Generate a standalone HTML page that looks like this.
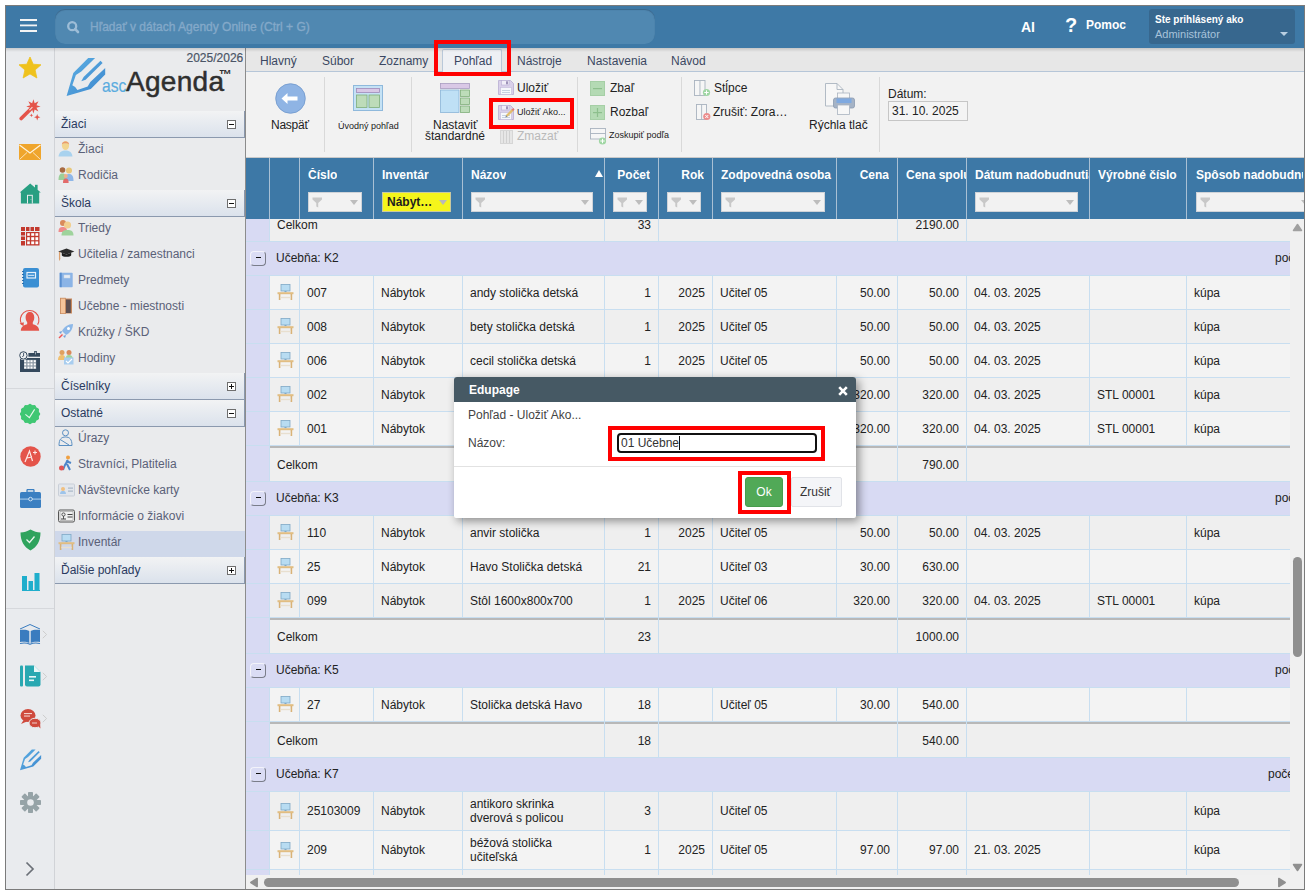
<!DOCTYPE html>
<html><head><meta charset="utf-8"><style>
*{box-sizing:border-box;margin:0;padding:0}
html,body{width:1310px;height:895px;overflow:hidden;background:#fff;font-family:"Liberation Sans",sans-serif;font-size:12px;color:#222}
.a{position:absolute;white-space:nowrap}
.t{position:absolute;white-space:nowrap;line-height:14px}
#frame{position:absolute;left:5px;top:5px;width:1300px;height:885px;border:1px solid #7b7b7b}
#top{position:absolute;left:6px;top:6px;width:1298px;height:42px;background:#3e79a6}
#icons{position:absolute;left:6px;top:48px;width:49px;height:841px;background:#e9ebee;border-right:1px solid #d1d3d7}
#side{position:absolute;left:55px;top:48px;width:190px;height:841px;background:#eaebed}
#main{position:absolute;left:245px;top:48px;width:1059px;height:841px;border-left:1px solid #8c8c8c;background:#f2f2f2}
.sh{position:absolute;left:55px;width:190px;height:27px;border-bottom:1px solid #8b99ae;background:linear-gradient(#f2f3f4,#dbe2ec);border-right:1px solid #8a98ad}
.sh span{position:absolute;left:6px;top:6px;color:#2a3a60;line-height:14px}
.sh i{position:absolute;left:172px;top:9px;width:9px;height:9px;border:1px solid #6e6e6e;background:#fff}
.sh i:before{content:"";position:absolute;left:1px;top:3px;width:5px;height:1.4px;background:#111}
.sh i.p:after{content:"";position:absolute;left:2.8px;top:1px;width:1.4px;height:5px;background:#111}
.si{position:absolute;left:55px;width:190px;height:26px}
.si span{position:absolute;left:23px;top:4px;color:#5a6178;line-height:14px}
.si svg{position:absolute;left:3px;top:2px}
.tab{position:absolute;top:54px;line-height:14px;color:#3b4762}
.sep{position:absolute;top:77px;width:1px;height:75px;background:#d9d9d9}
.rib{position:absolute;line-height:14px;color:#222;white-space:nowrap}
.hd{position:absolute;top:168px;color:#fff;font-weight:bold;line-height:14px;white-space:nowrap;overflow:hidden}
.hs{position:absolute;top:158px;width:1px;height:61px;background:#a9c0d4}
.flt{position:absolute;top:192px;height:20px;background:#f2f2f2;border:1px solid #d8d8d8}
.flt:before{content:"";position:absolute;left:6px;top:5px;border-left:6px solid transparent;border-right:6px solid transparent;border-top:6px solid #c6c6c6}
.flt:after{content:"";position:absolute;right:8px;top:8px;border-left:5px solid transparent;border-right:5px solid transparent;border-top:5px solid #c0c0c0}
.fstem{position:absolute;top:9px;left:11px;width:2px;height:6px;background:#c6c6c6}
.row{position:absolute;left:246px;width:1044px;overflow:hidden}
.c{position:absolute;top:0;height:100%;border-right:1px solid #c8def0;line-height:14px;white-space:nowrap;overflow:hidden}
.c span{position:absolute;left:7px}
.c span.r{left:auto;right:7px}
.grp{position:absolute;left:0;top:0;width:23px;height:100%;background:#d8daf3}
.btn{position:absolute;left:4px;top:9px;width:16px;height:15px;border:1px solid;border-color:#f3f3fa #7a7d89 #7a7d89 #f3f3fa;border-radius:4px;background:#dadcf4}
.btn:before{content:"";position:absolute;left:5px;top:5px;width:5px;height:1px;background:#111}
.red{position:absolute;border:4px solid #f00}
</style></head><body>
<div id="frame"></div>
<div id="top"></div>
<svg class="a" style="left:20px;top:19px" width="17" height="13"><rect x="0" y="0" width="17" height="2" fill="#f4f4f4"/><rect x="0" y="5.5" width="17" height="1.8" fill="#f4f4f4"/><rect x="0" y="11" width="17" height="2" fill="#f4f4f4"/></svg>
<div class="a" style="left:55px;top:9px;width:600px;height:35px;border-radius:10px;background:#5088b1;box-shadow:inset 0 1px 1px rgba(30,60,90,.45)"></div>
<svg class="a" style="left:65px;top:19px" width="16" height="16"><circle cx="7.2" cy="7.2" r="4.0" stroke="#9dbdd7" stroke-width="2.3" fill="none"/><line x1="10.2" y1="10.2" x2="13" y2="13" stroke="#9dbdd7" stroke-width="2.6" stroke-linecap="round"/></svg>
<div class="t" style="left:90px;top:20px;color:#84a9c9;-webkit-text-stroke:0.35px #84a9c9">Hľadať v dátach Agendy Online (Ctrl + G)</div>
<div class="t" style="left:1021px;top:18.5px;color:#fff;font-weight:bold;font-size:14px;line-height:16px">AI</div>
<div class="t" style="left:1065px;top:14px;color:#fff;font-weight:bold;font-size:20px;line-height:22px">?</div>
<div class="t" style="left:1086px;top:18px;color:#fff;font-weight:bold">Pomoc</div>
<div class="a" style="left:1149px;top:9px;width:146px;height:35px;border-radius:3px;background:#37678e"></div>
<div class="t" style="left:1155px;top:14px;color:#fff;font-weight:bold;font-size:10px;line-height:11px">Ste prihlásený ako</div>
<div class="t" style="left:1155px;top:28px;color:#a8c3db;font-size:11px;line-height:12px">Administrátor</div>
<div class="a" style="left:1280px;top:32px;border-left:4px solid transparent;border-right:4px solid transparent;border-top:4px solid #b9cfe1"></div>
<div id="icons"></div>
<div class="a" style="left:6px;top:388px;width:48px;height:1px;background:#d6d8dc"></div>
<div class="a" style="left:6px;top:608px;width:48px;height:1px;background:#d6d8dc"></div>

<svg class="a" style="left:19px;top:57px" width="22" height="22" viewBox="0 0 22 22"><polygon points="11,0 14.2,7.2 22,7.8 16.1,12.9 17.9,21 11,16.9 4.1,21 5.9,12.9 0,7.8 7.8,7.2" fill="#efc21d" stroke="#efc21d" stroke-width="0.8" stroke-linejoin="round"/></svg>
<svg class="a" style="left:19px;top:99px" width="23" height="23" viewBox="0 0 23 23"><polygon points="14.40,0.20 15.66,4.35 19.49,2.31 17.45,6.14 21.60,7.40 17.45,8.66 19.49,12.49 15.66,10.45 14.40,14.60 13.14,10.45 9.31,12.49 11.35,8.66 7.20,7.40 11.35,6.14 9.31,2.31 13.14,4.35" fill="#e4544a"/><line x1="2.2" y1="19.6" x2="13.6" y2="8.2" stroke="#e4544a" stroke-width="3.6" stroke-linecap="round"/><line x1="10.4" y1="11.2" x2="13.4" y2="8.2" stroke="#f6d6d3" stroke-width="1.1"/><polygon points="12.40,14.40 12.89,15.81 14.30,16.30 12.89,16.79 12.40,18.20 11.91,16.79 10.50,16.30 11.91,15.81" fill="#e4544a"/><polygon points="18.20,15.00 19.05,17.35 21.40,18.20 19.05,19.05 18.20,21.40 17.35,19.05 15.00,18.20 17.35,17.35" fill="#e4544a"/></svg>
<svg class="a" style="left:19px;top:144px" width="22" height="17" viewBox="0 0 22 17"><rect x="0" y="0" width="22" height="16" fill="#efa52c"/><polyline points="0.5,1 11,9 21.5,1" stroke="#fff3dc" stroke-width="1.2" fill="none"/><polyline points="0.5,15.5 8,8.5" stroke="#fff3dc" stroke-width="0.8" fill="none"/><polyline points="21.5,15.5 14,8.5" stroke="#fff3dc" stroke-width="0.8" fill="none"/></svg>
<svg class="a" style="left:20px;top:183px" width="21" height="21" viewBox="0 0 21 21"><polygon points="10.2,0.5 20.8,9.6 19.2,9.6 19.2,20.5 0.9,20.5 0.9,9.6 -0.4,9.6" fill="#289f82"/><rect x="15" y="1.8" width="2.6" height="5" fill="#289f82"/><rect x="7" y="11.8" width="5.8" height="8.7" fill="#e9ebee"/><rect x="8" y="12.8" width="3.8" height="7.7" fill="#289f82"/><rect x="10.6" y="16" width="0.7" height="0.7" fill="#cfe9e1"/></svg>
<svg class="a" style="left:21px;top:227px" width="19" height="19" viewBox="0 0 19 19"><g fill="#c2392e"><rect x="0" y="0" width="4" height="4"/><rect x="5" y="0" width="3.5" height="4"/><rect x="9.5" y="0" width="3.5" height="4"/><rect x="14" y="0" width="4.5" height="4"/><rect x="0" y="5" width="4" height="3.5"/><rect x="0" y="9.5" width="4" height="3.5"/><rect x="0" y="14" width="4" height="4.5"/><rect x="5" y="5" width="13.5" height="13.5"/></g><g fill="#fff"><rect x="6.2" y="6.2" width="2.6" height="2.6"/><rect x="10.2" y="6.2" width="3" height="2.6"/><rect x="14.4" y="6.2" width="2.8" height="2.6"/><rect x="6.2" y="10.2" width="2.6" height="3"/><rect x="10.2" y="10.2" width="3" height="3"/><rect x="14.4" y="10.2" width="2.8" height="3"/><rect x="6.2" y="14.4" width="2.6" height="2.8"/><rect x="10.2" y="14.4" width="3" height="2.8"/><rect x="14.4" y="14.4" width="2.8" height="2.8"/></g></svg>
<svg class="a" style="left:22px;top:268px" width="17" height="20" viewBox="0 0 17 20"><rect x="1" y="0" width="16" height="19.5" rx="2" fill="#3a8fd3"/><g fill="#2a6fae"><rect x="0" y="3" width="2" height="1"/><rect x="0" y="6" width="2" height="1"/><rect x="0" y="9" width="2" height="1"/><rect x="0" y="12" width="2" height="1"/><rect x="0" y="15" width="2" height="1"/></g><rect x="5" y="4.5" width="8.5" height="5.5" fill="none" stroke="#e6f1fb" stroke-width="1.2"/><rect x="6.2" y="6.8" width="6" height="1" fill="#e6f1fb"/></svg>
<svg class="a" style="left:19px;top:309px" width="23" height="23" viewBox="0 0 23 23"><path d="M6.6 8.5 C6.6 5 8.5 3 11 3 C13.5 3 15.3 5 15.3 8.5 C15.3 11 14.2 12.6 13.8 13.2 L13.8 15.2 C17 16 20 17.5 20.2 21.8 L1.8 21.8 C2 17.5 5 16 8.2 15.2 L8.2 13.2 C7.7 12.6 6.6 11 6.6 8.5z" fill="#e4544a"/><path d="M2.6 15.5 A9.3 9.3 0 1 1 18.6 15.6" stroke="#e4544a" stroke-width="1.1" fill="none"/><polygon points="0.6,14.6 4.8,13.2 4.6,17.2" fill="#e4544a"/></svg>
<svg class="a" style="left:19px;top:351px" width="22" height="22" viewBox="0 0 22 22"><rect x="9.4" y="2" width="11.6" height="3.7" fill="#35495d"/><rect x="15.2" y="0" width="2.6" height="3.8" fill="#35495d"/><rect x="16.2" y="0.8" width="0.7" height="2.6" fill="#cfd6dd"/><rect x="1" y="7" width="20" height="14" fill="#35495d"/><rect x="5" y="8.8" width="12.2" height="9.2" fill="#8d99a5"/><g fill="#fff"><rect x="5.2" y="9.2" width="2" height="2"/><rect x="8.5" y="9.2" width="2" height="2"/><rect x="11.5" y="9.2" width="2" height="2"/><rect x="14.8" y="9.2" width="2" height="2"/><rect x="5.2" y="12.4" width="2" height="2"/><rect x="8.5" y="12.4" width="2" height="2"/><rect x="11.5" y="12.4" width="2" height="2"/><rect x="14.8" y="12.4" width="2" height="2"/><rect x="5.2" y="15.6" width="2" height="2"/><rect x="8.5" y="15.6" width="2" height="2"/><rect x="11.5" y="15.6" width="2" height="2"/><rect x="14.8" y="15.6" width="2" height="2"/></g><circle cx="4.4" cy="4.4" r="4.6" fill="#e9ebee"/><circle cx="4.4" cy="4.4" r="3.7" fill="#eef0f2" stroke="#35495d" stroke-width="1"/><path d="M4.6 1.8 V5 L3.2 5.6" stroke="#35495d" stroke-width="0.9" fill="none"/></svg>
<svg class="a" style="left:20px;top:403px" width="21" height="22" viewBox="0 0 21 22"><polygon points="20.20,11.00 20.03,11.66 19.62,12.27 19.17,12.82 18.89,13.38 18.85,14.00 18.96,14.71 19.02,15.45 18.83,16.10 18.36,16.59 17.70,16.90 17.03,17.16 16.51,17.51 16.16,18.03 15.90,18.70 15.59,19.36 15.10,19.83 14.45,20.02 13.71,19.96 13.00,19.85 12.38,19.89 11.82,20.17 11.27,20.62 10.66,21.03 10.00,21.20 9.34,21.03 8.73,20.62 8.18,20.17 7.62,19.89 7.00,19.85 6.29,19.96 5.55,20.02 4.90,19.83 4.41,19.36 4.10,18.70 3.84,18.03 3.49,17.51 2.97,17.16 2.30,16.90 1.64,16.59 1.17,16.10 0.98,15.45 1.04,14.71 1.15,14.00 1.11,13.38 0.83,12.82 0.38,12.27 -0.03,11.66 -0.20,11.00 -0.03,10.34 0.38,9.73 0.83,9.18 1.11,8.62 1.15,8.00 1.04,7.29 0.98,6.55 1.17,5.90 1.64,5.41 2.30,5.10 2.97,4.84 3.49,4.49 3.84,3.97 4.10,3.30 4.41,2.64 4.90,2.17 5.55,1.98 6.29,2.04 7.00,2.15 7.62,2.11 8.18,1.83 8.73,1.38 9.34,0.97 10.00,0.80 10.66,0.97 11.27,1.38 11.82,1.83 12.38,2.11 13.00,2.15 13.71,2.04 14.45,1.98 15.10,2.17 15.59,2.64 15.90,3.30 16.16,3.97 16.51,4.49 17.03,4.84 17.70,5.10 18.36,5.41 18.83,5.90 19.02,6.55 18.96,7.29 18.85,8.00 18.89,8.62 19.17,9.18 19.62,9.73 20.03,10.34" fill="#3fc773"/><polyline points="5.4,11.3 9.4,14.6 14.6,6.4" stroke="#e6f8ec" stroke-width="1.1" fill="none"/></svg>
<svg class="a" style="left:20px;top:446px" width="21" height="21" viewBox="0 0 21 21"><circle cx="10.5" cy="10.5" r="10.2" fill="#e4544a"/><path d="M5 16 L9.5 5 L12.5 15 M7 12 L12 11" stroke="#fde8e6" stroke-width="1.2" fill="none"/><path d="M13 6.5 h4 M15 4.5 v4" stroke="#fde8e6" stroke-width="1.1"/></svg>
<svg class="a" style="left:20px;top:489px" width="21" height="19" viewBox="0 0 21 19"><rect x="7" y="0.5" width="7" height="3" rx="1" fill="none" stroke="#3b7fc1" stroke-width="1.3"/><rect x="0" y="3" width="21" height="16" rx="1.5" fill="#3b7fc1"/><rect x="0" y="9.5" width="21" height="1.2" fill="#9ec3e6"/><circle cx="10.5" cy="10.1" r="1.8" fill="#3b7fc1" stroke="#cfe3f5" stroke-width="1"/></svg>
<svg class="a" style="left:20px;top:529px" width="21" height="22" viewBox="0 0 21 22"><path d="M10.5 0.5 C14 2.5 17 3.5 20.5 3.5 C20.5 12 17 18 10.5 21.5 C4 18 0.5 12 0.5 3.5 C4 3.5 7 2.5 10.5 0.5z" fill="#2fa35d"/><polyline points="6.5,10.5 9.5,13.5 14.5,7.5" stroke="#e8f6ed" stroke-width="1.3" fill="none"/></svg>
<svg class="a" style="left:22px;top:573px" width="18" height="18" viewBox="0 0 18 18"><rect x="0" y="3" width="5" height="14" fill="#1faecc"/><rect x="6.5" y="8" width="4.5" height="9" fill="#1faecc"/><rect x="12.5" y="0" width="5" height="17" fill="#1faecc"/><rect x="0" y="17" width="18" height="1" fill="#1faecc"/></svg>
<svg class="a" style="left:19px;top:624px" width="22" height="21" viewBox="0 0 22 21"><path d="M1 5 L11 0.5 L21 5" stroke="#3a7cbf" stroke-width="1" fill="none"/><path d="M1 6 C4 5.5 8 5.5 10.3 7 V19 C8 17.5 4 17.5 1 18z" fill="#3a7cbf"/><path d="M21 6 C18 5.5 14 5.5 11.7 7 V19 C14 17.5 18 17.5 21 18z" fill="#3a7cbf"/><path d="M1 19.5 C4 18.8 8 18.8 11 20.3 C14 18.8 18 18.8 21 19.5" stroke="#3a7cbf" stroke-width="1.2" fill="none"/></svg>
<svg class="a" style="left:42px;top:630px" width="6" height="10"><polyline points="0.8,0.8 4.6,4.5 0.8,8.2" stroke="#cdcdcd" stroke-width="1" fill="none"/></svg>
<svg class="a" style="left:20px;top:665px" width="21" height="22" viewBox="0 0 21 22"><rect x="0" y="0.5" width="3" height="21" rx="1" fill="#29a8b1"/><path d="M5 0.5 H14 L20.5 7 V19.5 a2 2 0 0 1 -2 2 H7 a2 2 0 0 1 -2 -2z" fill="#29a8b1"/><path d="M14 0.5 V7 H20.5z" fill="#e9f7f8"/><rect x="9" y="11" width="7" height="1.6" fill="#e9f7f8"/><rect x="9" y="14.5" width="5" height="1.6" fill="#e9f7f8"/></svg>
<svg class="a" style="left:42px;top:672px" width="6" height="10"><polyline points="0.8,0.8 4.6,4.5 0.8,8.2" stroke="#cdcdcd" stroke-width="1" fill="none"/></svg>
<svg class="a" style="left:20px;top:708px" width="21" height="21" viewBox="0 0 21 21"><ellipse cx="8" cy="7.5" rx="7.5" ry="6.5" fill="#cf4a3d"/><polygon points="1,16 4,11.5 8,13" fill="#cf4a3d"/><ellipse cx="15" cy="15" rx="6" ry="4.8" fill="#cf4a3d" stroke="#e9ebee" stroke-width="1"/><polygon points="20.5,20.5 17,17 20,16" fill="#cf4a3d"/><g fill="#f4d0cc"><rect x="4" y="5" width="8" height="1.1"/><rect x="4" y="7.5" width="6" height="1.1"/><rect x="12" y="14.5" width="5" height="1"/></g></svg>
<svg class="a" style="left:42px;top:714px" width="6" height="10"><polyline points="0.8,0.8 4.6,4.5 0.8,8.2" stroke="#cdcdcd" stroke-width="1" fill="none"/></svg>
<svg class="a" style="left:16px;top:746px" width="28" height="27" viewBox="0 0 48 46"><g transform="translate(2.5,2.2) scale(0.94)"><defs><linearGradient id="pg1" x1="0" y1="0" x2="1" y2="1"><stop offset="0" stop-color="#5db0e4"/><stop offset="1" stop-color="#3c86cd"/></linearGradient></defs><path d="M4.6 41.9 L11.3 19 L26.2 4 L33.1 4 L19.3 17.5 L13.9 21.1 L10.3 31.3 Q13.5 32.5 15.4 36 L25.7 32.6 L28.3 28 L43.2 14.1 L43.2 20.6 L28.8 35 Z" fill="url(#pg1)"/><path d="M38.5 6.7 L40.6 9 L23.6 25.7 L19.3 27.2 L21.6 23.1 Z" fill="url(#pg1)"/></g></svg>
<svg class="a" style="left:20px;top:792px" width="21" height="21" viewBox="0 0 21 21"><g fill="#96a3a7"><circle cx="10.5" cy="10.5" r="7"/><rect x="8" y="0" width="5" height="4.5" rx="0.8"/><rect x="8" y="16.5" width="5" height="4.5" rx="0.8"/><rect x="0" y="8" width="4.5" height="5" rx="0.8"/><rect x="16.5" y="8" width="4.5" height="5" rx="0.8"/><rect x="8" y="0" width="5" height="4.5" rx="0.8" transform="rotate(45 10.5 10.5)"/><rect x="8" y="16.5" width="5" height="4.5" rx="0.8" transform="rotate(45 10.5 10.5)"/><rect x="0" y="8" width="4.5" height="5" rx="0.8" transform="rotate(45 10.5 10.5)"/><rect x="16.5" y="8" width="4.5" height="5" rx="0.8" transform="rotate(45 10.5 10.5)"/></g><circle cx="10.5" cy="10.5" r="3.3" fill="#e9ebee"/></svg>
<svg class="a" style="left:25px;top:861px" width="10" height="16" viewBox="0 0 10 16"><polyline points="1.5,1.5 8,8 1.5,14.5" stroke="#6b7077" stroke-width="1.7" fill="none"/></svg>

<div id="side"></div>
<div class="t" style="left:186.5px;top:51px;color:#4b5566;-webkit-text-stroke:0.2px #4b5566">2025/2026</div>
<svg class="a" style="left:62px;top:54px" width="48" height="46" viewBox="0 0 48 46"><defs><linearGradient id="lg" x1="0" y1="0" x2="1" y2="1"><stop offset="0" stop-color="#5db0e4"/><stop offset="1" stop-color="#3c86cd"/></linearGradient></defs><path d="M4.6 41.9 L11.3 19 L26.2 4 L33.1 4 L19.3 17.5 L13.9 21.1 L10.3 31.3 Q13.5 32.5 15.4 36 L25.7 32.6 L28.3 28 L43.2 14.1 L43.2 20.6 L28.8 35 Z" fill="url(#lg)"/><path d="M38.5 6.7 L40.6 9 L23.6 25.7 L19.3 27.2 L21.6 23.1 Z" fill="url(#lg)"/></svg>
<div class="t" style="left:102px;top:76px;color:#5aabdf;font-size:19px;line-height:20px;-webkit-text-stroke:0.2px #5aabdf;transform:scaleX(0.82);transform-origin:0 0">asc</div>
<div class="t" style="left:126px;top:67px;color:#2f2f2f;font-size:28px;line-height:30px;letter-spacing:0.3px;-webkit-text-stroke:0.5px #2f2f2f">Agenda</div>
<div class="t" style="left:219px;top:68px;color:#2f2f2f;font-size:13px;line-height:14px;font-weight:bold">™</div>
<div class="sh" style="top:111px"><span>Žiaci</span><i></i></div>
<div class="si" style="top:138px;"><svg width="15" height="17" viewBox="0 0 15 17"><ellipse cx="7.5" cy="5.5" rx="3.6" ry="4.6" fill="#f2d58f"/><path d="M3.8 4.5 C4 0.5 11 0.5 11.2 4.5 C10 2.8 5 2.8 3.8 4.5z" fill="#e8996f"/><path d="M0.5 16.5 C1 12 4 10.5 7.5 10.5 C11 10.5 14 12 14.5 16.5z" fill="#a9d2ee"/></svg><span>Žiaci</span></div>
<div class="si" style="top:164px;"><svg width="16" height="17" viewBox="0 0 16 17"><circle cx="4.5" cy="4" r="2.8" fill="#a86b43"/><path d="M0.5 14 C0.5 9 2 7.5 4.5 7.5 C7 7.5 8 9 8 14z" fill="#9ccf9a"/><circle cx="11" cy="4.5" r="3" fill="#e8c77a"/><path d="M7 15 C7 9.5 8.5 8 11 8 C13.5 8 15.5 9.5 15.5 15z" fill="#8fb7e8"/><circle cx="7.8" cy="10" r="2" fill="#f0b08a"/><path d="M5 17 C5 13.5 6 12.5 7.8 12.5 C9.6 12.5 10.6 13.5 10.6 17z" fill="#e26a6a"/></svg><span>Rodičia</span></div>
<div class="sh" style="top:190px"><span>Škola</span><i></i></div>
<div class="si" style="top:217px;"><svg width="16" height="17" viewBox="0 0 16 17"><circle cx="5" cy="4" r="3" fill="#d98a5a"/><path d="M0.5 13 C0.5 9 2 8 5 8 C8 8 9 9 9 13z" fill="#ef8b8b"/><circle cx="9.5" cy="6" r="3.6" fill="#f2cf8f"/><path d="M3.5 16.5 C3.5 12 6 11 9.5 11 C13 11 15.5 12 15.5 16.5z" fill="#9fd39c"/></svg><span>Triedy</span></div>
<div class="si" style="top:243px;"><svg width="17" height="17" viewBox="0 0 17 17"><polygon points="8.5,3.6 16.4,6.6 8.5,9.4 0.2,6.6" fill="#2a2a2a"/><path d="M3.8 7.8 V10.2 C4.5 12.4 12.5 12.4 13.2 10.2 V7.8 L8.5 9.6z" fill="#1e1e1e"/><path d="M1.6 6.8 V13.5" stroke="#dca06e" stroke-width="1.3"/><path d="M0.9 13 L2.3 13 L2 15.4 L1.2 15.4z" fill="#dca06e"/></svg><span>Učitelia / zamestnanci</span></div>
<div class="si" style="top:269px;"><svg width="16" height="17" viewBox="0 0 16 17"><rect x="1.7" y="1.7" width="13" height="14.5" rx="0.8" fill="#8bb4e6"/><rect x="1.7" y="1.7" width="2" height="14.5" fill="#5a8fd0"/><rect x="6" y="4" width="6" height="3" fill="#e4ebf4" stroke="#c9d6e6" stroke-width="0.5"/></svg><span>Predmety</span></div>
<div class="si" style="top:295px;"><svg width="15" height="17" viewBox="0 0 15 17"><rect x="2.5" y="1.5" width="11.5" height="15" fill="#c98a5e"/><rect x="7.2" y="2.5" width="5.6" height="13.5" fill="#5c4f52"/><rect x="2.5" y="1.2" width="5" height="15.5" fill="#f4c49b" stroke="#c98a5e" stroke-width="0.8"/></svg><span>Učebne - miestnosti</span></div>
<div class="si" style="top:321px;"><svg width="16" height="16" viewBox="0 0 16 16"><path d="M15 1 C10 1 6 4 4 8 L8 12 C12 10 15 6 15 1z" fill="#8db8e8"/><circle cx="10.5" cy="5.5" r="1.5" fill="#fff"/><path d="M4 8 L1 9 L3 11z M8 12 L7 15 L5 13z" fill="#6f9fd8"/><path d="M4.5 11.5 L1 15" stroke="#e55" stroke-width="1.5"/></svg><span>Krúžky / ŠKD</span></div>
<div class="si" style="top:347px;"><svg width="16" height="16" viewBox="0 0 16 16"><circle cx="4" cy="3.5" r="2.5" fill="#e0a060"/><circle cx="11" cy="3.5" r="2.5" fill="#d98a5a"/><path d="M0 11 C0 7 2 6 4 6 C6 6 7.5 7 7.5 11z" fill="#f0c070"/><path d="M7.5 11 C7.5 7 9 6 11 6 C13 6 15 7 15 11z" fill="#9fd39c"/><rect x="6" y="8.5" width="9.5" height="7" fill="#a8cdef"/><polyline points="8,12 10,14 14,10" stroke="#fff" stroke-width="1.1" fill="none"/></svg><span>Hodiny</span></div>
<div class="sh" style="top:373px"><span>Číselníky</span><i class="p"></i></div>
<div class="sh" style="top:400px"><span>Ostatné</span><i></i></div>
<div class="si" style="top:427px;"><svg width="15" height="17" viewBox="0 0 15 17"><circle cx="7.5" cy="3.8" r="3" fill="none" stroke="#5b8fc2" stroke-width="1"/><path d="M1 16.5 C1 10 3.5 8 7.5 8 C11.5 8 14 10 14 16.5z" fill="none" stroke="#5b8fc2" stroke-width="1"/><path d="M3 11 L11 16" stroke="#5b8fc2" stroke-width="1"/></svg><span>Úrazy</span></div>
<div class="si" style="top:453px;"><svg width="16" height="16" viewBox="0 0 16 16"><circle cx="10" cy="2.5" r="2" fill="#f0a040"/><path d="M10 5 L7 10 L5 15 M9 9 L12 15 M8 6 L13 8" stroke="#4d86c9" stroke-width="2" fill="none"/><circle cx="3.5" cy="13" r="2.5" fill="#e05555"/></svg><span>Stravníci, Platitelia</span></div>
<div class="si" style="top:479px;"><svg style="top:4px" width="17" height="14" viewBox="0 0 17 14"><rect x="0.5" y="1" width="16" height="12" rx="1" fill="#e2e6ec" stroke="#c9cfd8"/><circle cx="5" cy="6" r="2" fill="#f0c080"/><path d="M2 11 C2 8.5 3.5 8 5 8 C6.5 8 8 8.5 8 11z" fill="#9ec4ea"/><rect x="10" y="4.5" width="5" height="1.2" fill="#a9b7c8"/><rect x="10" y="7.5" width="5" height="1.2" fill="#a9b7c8"/></svg><span>Návštevnícke karty</span></div>
<div class="si" style="top:505px;"><svg style="top:4px" width="17" height="14" viewBox="0 0 17 14"><rect x="0.5" y="1" width="16" height="12" rx="1.5" fill="#f0f0f0" stroke="#555" stroke-width="1"/><rect x="2" y="2.5" width="13" height="9" fill="none" stroke="#999" stroke-width="0.6"/><circle cx="5.5" cy="5.5" r="1.6" fill="none" stroke="#444" stroke-width="0.9"/><path d="M3 10 H8" stroke="#444" stroke-width="1"/><path d="M5.5 7 V10" stroke="#444" stroke-width="0.9"/><rect x="9.5" y="5" width="5" height="1" fill="#444"/><rect x="9.5" y="7.5" width="5" height="1" fill="#444"/></svg><span>Informácie o žiakovi</span></div>
<div class="si" style="top:531px;background:#cfd8ea;"><svg style="top:3px" width="17" height="17" viewBox="0 0 17 17"><rect x="4" y="0.5" width="9" height="6.5" fill="#b8dcf2" stroke="#7fa9c6" stroke-width="0.8"/><rect x="7.5" y="7" width="2" height="1.2" fill="#7fa9c6"/><rect x="0.5" y="8.2" width="16" height="2" fill="#e1bd82"/><rect x="1.8" y="10" width="1.6" height="6" fill="#d9b277"/><rect x="13.6" y="10" width="1.6" height="6" fill="#d9b277"/><rect x="3.4" y="12.8" width="10.2" height="1.4" fill="#e8dfcf"/></svg><span>Inventár</span></div>
<div class="sh" style="top:557px"><span>Ďalšie pohľady</span><i class="p"></i></div>
<div id="main"></div>
<div class="a" style="left:246px;top:48px;width:1058px;height:24px;background:#e7e7e7;border-bottom:1px solid #b6c6d8"></div>
<div class="a" style="left:442px;top:49px;width:60px;height:23px;background:#eef0f4;border:1px solid #b9c8d9;border-bottom:none;border-radius:2px 2px 0 0"></div>
<div class="tab" style="left:260px">Hlavný</div>
<div class="tab" style="left:322px">Súbor</div>
<div class="tab" style="left:379px">Zoznamy</div>
<div class="tab" style="left:454px">Pohľad</div>
<div class="tab" style="left:517px">Nástroje</div>
<div class="tab" style="left:587px">Nastavenia</div>
<div class="tab" style="left:671px">Návod</div>
<div class="a" style="left:246px;top:157px;width:1058px;height:1px;background:#c9c9c9"></div>
<div class="sep" style="left:324px"></div>
<div class="sep" style="left:411px"></div>
<div class="sep" style="left:577px"></div>
<div class="sep" style="left:681px"></div>
<div class="sep" style="left:879px"></div>
<svg class="a" style="left:275px;top:83px" width="31" height="31" viewBox="0 0 31 31"><circle cx="15.5" cy="15.5" r="14.8" fill="#8fb4e4" stroke="#6f97cc" stroke-width="0.8"/><polygon points="6.5,15.5 12.5,10 12.5,13.5 22.5,13.5 22.5,17.5 12.5,17.5 12.5,21" fill="#fff"/></svg>
<div class="rib" style="left:271px;top:118px;font-size:12px;line-height:14px;color:#222;letter-spacing:-0.25px">Naspäť</div>
<svg class="a" style="left:353px;top:85px" width="30" height="26" viewBox="0 0 30 26"><rect x="0.5" y="0.5" width="29" height="25" fill="#c5e2f5" stroke="#8fb9dc"/><rect x="3.5" y="3.5" width="23" height="4" fill="#d9c8e6" stroke="#a08bb8" stroke-width="0.8"/><rect x="3.5" y="10" width="10.5" height="12.5" fill="#bddcb9" stroke="#7fae7b" stroke-width="0.8"/><rect x="16" y="10" width="10.5" height="12.5" fill="#bddcb9" stroke="#7fae7b" stroke-width="0.8"/></svg>
<div class="rib" style="left:338px;top:121px;font-size:9px;line-height:10px;color:#222;">Úvodný pohľad</div>
<svg class="a" style="left:440px;top:83px" width="30" height="30" viewBox="0 0 30 30"><rect x="0.5" y="0.5" width="29" height="5" fill="#d9c8e6" stroke="#a89cc0" stroke-width="0.8"/><rect x="0.5" y="7" width="18.5" height="22.5" fill="#bfe0f5" stroke="#8bb5d8" stroke-width="0.8"/><rect x="20.5" y="7" width="9" height="6.5" fill="#bddcb9" stroke="#7fae7b" stroke-width="0.8"/><rect x="20.5" y="15" width="9" height="6.5" fill="#bddcb9" stroke="#7fae7b" stroke-width="0.8"/><rect x="20.5" y="23" width="9" height="6.5" fill="#bddcb9" stroke="#7fae7b" stroke-width="0.8"/></svg>
<div class="rib" style="left:433px;top:118px;font-size:12px;line-height:14px;color:#222;">Nastaviť</div>
<div class="rib" style="left:425px;top:129px;font-size:12px;line-height:14px;color:#222;">štandardné</div>
<svg class="a" style="left:498px;top:80px" width="16" height="15" viewBox="0 0 16 15"><path d="M0.5 0.5 H12.5 L15.5 3.5 V14.5 H0.5z" fill="#d9d0ea" stroke="#b8add2" stroke-width="0.8"/><rect x="3.5" y="0.5" width="7.5" height="4.5" fill="#f1eef7" stroke="#b8add2" stroke-width="0.6"/><rect x="8" y="1.3" width="2" height="3" fill="#9d92b8"/><rect x="2.5" y="7.5" width="11" height="7" fill="#f6f8fb" stroke="#c4bbd9" stroke-width="0.6"/><rect x="4" y="10" width="8" height="0.8" fill="#b9c7da"/><rect x="4" y="12" width="8" height="0.8" fill="#b9c7da"/></svg>
<div class="rib" style="left:517px;top:81px;font-size:12px;line-height:14px;color:#222;">Uložiť</div>
<svg class="a" style="left:498px;top:105px" width="16" height="15" viewBox="0 0 16 15"><path d="M0.5 0.5 H12.5 L15.5 3.5 V14.5 H0.5z" fill="#d9d0ea" stroke="#b8add2" stroke-width="0.8"/><rect x="3.5" y="0.5" width="7.5" height="4.5" fill="#f1eef7" stroke="#b8add2" stroke-width="0.6"/><rect x="8" y="1.3" width="2" height="3" fill="#9d92b8"/><rect x="2.5" y="7.5" width="11" height="7" fill="#f6f8fb" stroke="#c4bbd9" stroke-width="0.6"/><rect x="4" y="10" width="8" height="0.8" fill="#b9c7da"/><rect x="4" y="12" width="8" height="0.8" fill="#b9c7da"/></svg>
<svg class="a" style="left:505px;top:107px" width="10" height="11" viewBox="0 0 10 11"><path d="M1.6 9 L8 2.6" stroke="#e1bf6e" stroke-width="2.4"/><path d="M7.4 1.9 L8.8 3.3" stroke="#e07a7a" stroke-width="2.2"/><path d="M0.4 10.4 L1 8.2 L2.5 9.7z" fill="#7a8593"/></svg>
<div class="rib" style="left:517px;top:107px;font-size:9px;line-height:10px;color:#222;">Uložiť Ako...</div>
<svg class="a" style="left:500px;top:130px" width="13" height="14" viewBox="0 0 13 14"><rect x="0.5" y="0.5" width="12" height="13" fill="#e6e6e6" stroke="#d6d6d6"/><g fill="#d0d0d0"><rect x="3" y="1" width="1" height="12"/><rect x="6" y="1" width="1" height="12"/><rect x="9" y="1" width="1" height="12"/></g></svg>
<div class="rib" style="left:517px;top:129px;font-size:12px;line-height:14px;color:#b9b9b9;">Zmazať</div>
<svg class="a" style="left:590px;top:81px" width="15" height="15" viewBox="0 0 15 15"><rect x="0.5" y="0.5" width="14" height="14" fill="#b4dab4" stroke="#a6cfa6"/><rect x="3" y="7" width="9" height="1.2" fill="#8dbf8d"/></svg>
<div class="rib" style="left:610px;top:81px;font-size:12px;line-height:14px;color:#222;">Zbaľ</div>
<svg class="a" style="left:590px;top:105px" width="15" height="15" viewBox="0 0 15 15"><rect x="0.5" y="0.5" width="14" height="14" fill="#b4dab4" stroke="#a6cfa6"/><rect x="3" y="7" width="9" height="1.2" fill="#8dbf8d"/><rect x="6.9" y="3" width="1.2" height="9" fill="#8dbf8d"/></svg>
<div class="rib" style="left:610px;top:105px;font-size:12px;line-height:14px;color:#222;">Rozbaľ</div>
<svg class="a" style="left:590px;top:128px" width="17" height="17" viewBox="0 0 17 17"><rect x="0.5" y="0.5" width="15" height="10.5" fill="#f6f6f6" stroke="#a9b3bf" stroke-width="0.9"/><rect x="0.5" y="5" width="15" height="0.9" fill="#a9b3bf"/><circle cx="12.5" cy="13" r="3.6" fill="#9fd6a3"/><path d="M12.5 10.8 V15.2 M10.3 13 H14.7" stroke="#fff" stroke-width="1"/></svg>
<div class="rib" style="left:609px;top:130px;font-size:9px;line-height:10px;color:#222;">Zoskupiť podľa</div>
<svg class="a" style="left:694px;top:80px" width="17" height="17" viewBox="0 0 17 17"><rect x="0.5" y="0.5" width="10.5" height="15" fill="#f6f6f6" stroke="#a9b3bf" stroke-width="0.9"/><rect x="5.5" y="0.5" width="0.9" height="15" fill="#a9b3bf"/><circle cx="12.5" cy="12.5" r="3.6" fill="#9fd6a3"/><path d="M12.5 10.3 V14.7 M10.3 12.5 H14.7" stroke="#fff" stroke-width="1"/></svg>
<div class="rib" style="left:714px;top:81px;font-size:12px;line-height:14px;color:#222;">Stĺpce</div>
<svg class="a" style="left:696px;top:104px" width="15" height="17" viewBox="0 0 15 17"><rect x="0.5" y="0.5" width="10" height="15" fill="#f6f6f6" stroke="#a9b3bf" stroke-width="0.9"/><rect x="5.2" y="0.5" width="0.9" height="15" fill="#a9b3bf"/><circle cx="10.8" cy="12.5" r="3.6" fill="#ec8d8d"/><path d="M9.3 11 L12.3 14 M12.3 11 L9.3 14" stroke="#fff" stroke-width="1"/></svg>
<div class="rib" style="left:713px;top:105px;font-size:12px;line-height:14px;color:#222;">Zrušiť: Zora…</div>
<svg class="a" style="left:825px;top:83px" width="30" height="32" viewBox="0 0 30 32"><path d="M0.5 0.5 H12 L18 6.5 V23 H0.5z" fill="#f7f7f7" stroke="#aab4c0" stroke-width="0.9"/><path d="M12 0.5 V6.5 H18" fill="none" stroke="#aab4c0" stroke-width="0.9"/><rect x="12.5" y="10" width="12" height="6" fill="#f7f7f7" stroke="#aab4c0" stroke-width="0.8"/><rect x="8.5" y="15" width="21" height="10" rx="2" fill="#a5b3c6" stroke="#8b9bb0" stroke-width="0.8"/><rect x="11.5" y="15.5" width="15" height="4.5" fill="#7fa9e0"/><rect x="12.5" y="22" width="12" height="9.5" fill="#f7f7f7" stroke="#aab4c0" stroke-width="0.8"/></svg>
<div class="rib" style="left:809px;top:118px;font-size:12px;line-height:14px;color:#222;">Rýchla tlač</div>
<div class="rib" style="left:888px;top:87px;font-size:12px;line-height:14px;color:#222;">Dátum:</div>
<div class="a" style="left:888px;top:101px;width:80px;height:20px;border:1px solid #c6c6c6;background:#f4f4f4"></div>
<div class="rib" style="left:892px;top:104px;font-size:12px;line-height:14px;color:#222;">31. 10. 2025</div>
<div class="a" style="left:246px;top:158px;width:1058px;height:61px;background:#3d78a6"></div>
<div class="hs" style="left:269px"></div>
<div class="hs" style="left:299px"></div>
<div class="hs" style="left:373px"></div>
<div class="hs" style="left:462px"></div>
<div class="hs" style="left:604px"></div>
<div class="hs" style="left:658px"></div>
<div class="hs" style="left:712px"></div>
<div class="hs" style="left:836px"></div>
<div class="hs" style="left:897px"></div>
<div class="hs" style="left:966px"></div>
<div class="hs" style="left:1089px"></div>
<div class="hs" style="left:1186px"></div>
<div class="hd" style="left:308px;">Číslo</div>
<div class="hd" style="left:382px;">Inventár</div>
<div class="hd" style="left:471px;">Názov</div>
<div class="a" style="left:595px;top:170px;border-left:4px solid transparent;border-right:4px solid transparent;border-bottom:7px solid #fff"></div>
<div class="hd" style="left:500px;width:150px;text-align:right">Počet</div>
<div class="hd" style="left:554px;width:150px;text-align:right">Rok</div>
<div class="hd" style="left:721px;width:115px;">Zodpovedná osoba</div>
<div class="hd" style="left:739px;width:150px;text-align:right">Cena</div>
<div class="hd" style="left:906px;width:60px;">Cena spolu</div>
<div class="hd" style="left:975px;width:114px;">Dátum nadobudnutia</div>
<div class="hd" style="left:1098px;">Výrobné číslo</div>
<div class="hd" style="left:1196px;width:107px;">Spôsob nadobudnutia</div>
<div class="a" style="left:308px;top:192px;width:54px;height:20px;background:#f2f2f2;border:1px solid #cfd3d8;overflow:hidden"><svg class="a" style="left:3px;top:4px" width="11" height="11" viewBox="0 0 11 11"><path d="M0.5 0.5 H10 V2.5 L6.2 6 V10.5 L4.3 9.5 V6 L0.5 2.5z" fill="#c8c8c8"/></svg><div class="a" style="left:41px;top:7px;border-left:4px solid transparent;border-right:4px solid transparent;border-top:5px solid #bdbdbd"></div></div>
<div class="a" style="left:382px;top:192px;width:69px;height:20px;background:#f5f51b;border:1px solid #c9c9a0"><span class="t" style="left:4px;top:2px;font-weight:bold;color:#1e1e1e">Nábyt…</span><div class="a" style="right:3px;top:7px;border-left:4px solid transparent;border-right:4px solid transparent;border-top:5px solid #b9b9b9"></div></div>
<div class="a" style="left:471px;top:192px;width:122px;height:20px;background:#f2f2f2;border:1px solid #cfd3d8;overflow:hidden"><svg class="a" style="left:3px;top:4px" width="11" height="11" viewBox="0 0 11 11"><path d="M0.5 0.5 H10 V2.5 L6.2 6 V10.5 L4.3 9.5 V6 L0.5 2.5z" fill="#c8c8c8"/></svg><div class="a" style="left:109px;top:7px;border-left:4px solid transparent;border-right:4px solid transparent;border-top:5px solid #bdbdbd"></div></div>
<div class="a" style="left:613px;top:192px;width:34px;height:20px;background:#f2f2f2;border:1px solid #cfd3d8;overflow:hidden"><svg class="a" style="left:3px;top:4px" width="11" height="11" viewBox="0 0 11 11"><path d="M0.5 0.5 H10 V2.5 L6.2 6 V10.5 L4.3 9.5 V6 L0.5 2.5z" fill="#c8c8c8"/></svg><div class="a" style="left:21px;top:7px;border-left:4px solid transparent;border-right:4px solid transparent;border-top:5px solid #bdbdbd"></div></div>
<div class="a" style="left:667px;top:192px;width:34px;height:20px;background:#f2f2f2;border:1px solid #cfd3d8;overflow:hidden"><svg class="a" style="left:3px;top:4px" width="11" height="11" viewBox="0 0 11 11"><path d="M0.5 0.5 H10 V2.5 L6.2 6 V10.5 L4.3 9.5 V6 L0.5 2.5z" fill="#c8c8c8"/></svg><div class="a" style="left:21px;top:7px;border-left:4px solid transparent;border-right:4px solid transparent;border-top:5px solid #bdbdbd"></div></div>
<div class="a" style="left:721px;top:192px;width:104px;height:20px;background:#f2f2f2;border:1px solid #cfd3d8;overflow:hidden"><svg class="a" style="left:3px;top:4px" width="11" height="11" viewBox="0 0 11 11"><path d="M0.5 0.5 H10 V2.5 L6.2 6 V10.5 L4.3 9.5 V6 L0.5 2.5z" fill="#c8c8c8"/></svg><div class="a" style="left:91px;top:7px;border-left:4px solid transparent;border-right:4px solid transparent;border-top:5px solid #bdbdbd"></div></div>
<div class="a" style="left:975px;top:192px;width:103px;height:20px;background:#f2f2f2;border:1px solid #cfd3d8;overflow:hidden"><svg class="a" style="left:3px;top:4px" width="11" height="11" viewBox="0 0 11 11"><path d="M0.5 0.5 H10 V2.5 L6.2 6 V10.5 L4.3 9.5 V6 L0.5 2.5z" fill="#c8c8c8"/></svg><div class="a" style="left:90px;top:7px;border-left:4px solid transparent;border-right:4px solid transparent;border-top:5px solid #bdbdbd"></div></div>
<div class="a" style="left:1196px;top:192px;width:108px;height:20px;background:#f2f2f2;border:1px solid #cfd3d8;border-right:none;overflow:hidden"><svg class="a" style="left:3px;top:4px" width="11" height="11" viewBox="0 0 11 11"><path d="M0.5 0.5 H10 V2.5 L6.2 6 V10.5 L4.3 9.5 V6 L0.5 2.5z" fill="#c8c8c8"/></svg><div class="a" style="left:104px;top:7px;border-left:4px solid transparent;border-right:4px solid transparent;border-top:5px solid #bdbdbd"></div></div>
<div class="a" style="left:246px;top:219px;width:1044px;height:656px;overflow:hidden;background:#f2f2f2">
<div class="a" style="left:0;top:-11px;width:23px;height:34px;background:#d8daf3;border-bottom:1px solid #c8def0"></div><div class="a" style="left:23px;top:-11px;width:1px;height:34px;background:#c8def0"></div><div class="a" style="left:24px;top:-11px;width:1030px;height:34px;background:#efefef;border-bottom:1px solid #c8def0"></div><div class="a" style="left:358px;top:-11px;width:1px;height:34px;background:#c8def0"></div><div class="a" style="left:412px;top:-11px;width:1px;height:34px;background:#c8def0"></div><div class="a" style="left:651px;top:-11px;width:1px;height:34px;background:#c8def0"></div><div class="a" style="left:720px;top:-11px;width:1px;height:34px;background:#c8def0"></div><div class="t" style="left:31px;top:-1.5px">Celkom</div><div class="t" style="left:359px;width:46px;top:-1.5px;text-align:right">33</div><div class="t" style="left:652px;width:61px;top:-1.5px;text-align:right">2190.00</div>
<div class="a" style="left:0;top:23px;width:1044px;height:34px;background:#d8daf3;border-bottom:1px solid #c8def0"><div class="btn"></div><div class="t" style="left:30px;top:8.5px">Učebňa: K2</div><div class="t" style="left:1029px;top:8.5px">počet: 5</div></div>
<div class="a" style="left:0;top:57px;width:23px;height:34px;background:#d8daf3;border-bottom:1px solid #c8def0"></div><div class="a" style="left:23px;top:57px;width:1px;height:34px;background:#c8def0"></div><div class="a" style="left:24px;top:57px;width:1030px;height:34px;background:#f3f3f3;border-bottom:1px solid #c8def0"></div><div class="a" style="left:53px;top:57px;width:1px;height:34px;background:#c8def0"></div><div class="a" style="left:31px;top:65px"><svg width="17" height="17" viewBox="0 0 17 17"><rect x="4" y="0.5" width="9" height="6.5" fill="#b8dcf2" stroke="#7fa9c6" stroke-width="0.8"/><rect x="7.5" y="7" width="2" height="1.2" fill="#7fa9c6"/><rect x="0.5" y="8.2" width="16" height="2" fill="#e1bd82"/><rect x="1.8" y="10" width="1.6" height="6" fill="#d9b277"/><rect x="13.6" y="10" width="1.6" height="6" fill="#d9b277"/><rect x="3.4" y="12.8" width="10.2" height="1.4" fill="#e8dfcf"/></svg></div><div class="a" style="left:127px;top:57px;width:1px;height:34px;background:#c8def0"></div><div class="t" style="left:61px;top:66.5px">007</div><div class="a" style="left:216px;top:57px;width:1px;height:34px;background:#c8def0"></div><div class="t" style="left:135px;top:66.5px">Nábytok</div><div class="a" style="left:358px;top:57px;width:1px;height:34px;background:#c8def0"></div><div class="t" style="left:224px;top:66.5px">andy stolička detská</div><div class="a" style="left:412px;top:57px;width:1px;height:34px;background:#c8def0"></div><div class="t" style="left:359px;width:46px;top:66.5px;text-align:right">1</div><div class="a" style="left:466px;top:57px;width:1px;height:34px;background:#c8def0"></div><div class="t" style="left:413px;width:46px;top:66.5px;text-align:right">2025</div><div class="a" style="left:590px;top:57px;width:1px;height:34px;background:#c8def0"></div><div class="t" style="left:474px;top:66.5px">Učiteľ 05</div><div class="a" style="left:651px;top:57px;width:1px;height:34px;background:#c8def0"></div><div class="t" style="left:591px;width:53px;top:66.5px;text-align:right">50.00</div><div class="a" style="left:720px;top:57px;width:1px;height:34px;background:#c8def0"></div><div class="t" style="left:652px;width:61px;top:66.5px;text-align:right">50.00</div><div class="a" style="left:843px;top:57px;width:1px;height:34px;background:#c8def0"></div><div class="t" style="left:728px;top:66.5px">04. 03. 2025</div><div class="a" style="left:940px;top:57px;width:1px;height:34px;background:#c8def0"></div><div class="a" style="left:1054px;top:57px;width:1px;height:34px;background:#c8def0"></div><div class="t" style="left:948px;top:66.5px">kúpa</div>
<div class="a" style="left:0;top:91px;width:23px;height:34px;background:#d8daf3;border-bottom:1px solid #c8def0"></div><div class="a" style="left:23px;top:91px;width:1px;height:34px;background:#c8def0"></div><div class="a" style="left:24px;top:91px;width:1030px;height:34px;background:#efefef;border-bottom:1px solid #c8def0"></div><div class="a" style="left:53px;top:91px;width:1px;height:34px;background:#c8def0"></div><div class="a" style="left:31px;top:99px"><svg width="17" height="17" viewBox="0 0 17 17"><rect x="4" y="0.5" width="9" height="6.5" fill="#b8dcf2" stroke="#7fa9c6" stroke-width="0.8"/><rect x="7.5" y="7" width="2" height="1.2" fill="#7fa9c6"/><rect x="0.5" y="8.2" width="16" height="2" fill="#e1bd82"/><rect x="1.8" y="10" width="1.6" height="6" fill="#d9b277"/><rect x="13.6" y="10" width="1.6" height="6" fill="#d9b277"/><rect x="3.4" y="12.8" width="10.2" height="1.4" fill="#e8dfcf"/></svg></div><div class="a" style="left:127px;top:91px;width:1px;height:34px;background:#c8def0"></div><div class="t" style="left:61px;top:100.5px">008</div><div class="a" style="left:216px;top:91px;width:1px;height:34px;background:#c8def0"></div><div class="t" style="left:135px;top:100.5px">Nábytok</div><div class="a" style="left:358px;top:91px;width:1px;height:34px;background:#c8def0"></div><div class="t" style="left:224px;top:100.5px">bety stolička detská</div><div class="a" style="left:412px;top:91px;width:1px;height:34px;background:#c8def0"></div><div class="t" style="left:359px;width:46px;top:100.5px;text-align:right">1</div><div class="a" style="left:466px;top:91px;width:1px;height:34px;background:#c8def0"></div><div class="t" style="left:413px;width:46px;top:100.5px;text-align:right">2025</div><div class="a" style="left:590px;top:91px;width:1px;height:34px;background:#c8def0"></div><div class="t" style="left:474px;top:100.5px">Učiteľ 05</div><div class="a" style="left:651px;top:91px;width:1px;height:34px;background:#c8def0"></div><div class="t" style="left:591px;width:53px;top:100.5px;text-align:right">50.00</div><div class="a" style="left:720px;top:91px;width:1px;height:34px;background:#c8def0"></div><div class="t" style="left:652px;width:61px;top:100.5px;text-align:right">50.00</div><div class="a" style="left:843px;top:91px;width:1px;height:34px;background:#c8def0"></div><div class="t" style="left:728px;top:100.5px">04. 03. 2025</div><div class="a" style="left:940px;top:91px;width:1px;height:34px;background:#c8def0"></div><div class="a" style="left:1054px;top:91px;width:1px;height:34px;background:#c8def0"></div><div class="t" style="left:948px;top:100.5px">kúpa</div>
<div class="a" style="left:0;top:125px;width:23px;height:34px;background:#d8daf3;border-bottom:1px solid #c8def0"></div><div class="a" style="left:23px;top:125px;width:1px;height:34px;background:#c8def0"></div><div class="a" style="left:24px;top:125px;width:1030px;height:34px;background:#f3f3f3;border-bottom:1px solid #c8def0"></div><div class="a" style="left:53px;top:125px;width:1px;height:34px;background:#c8def0"></div><div class="a" style="left:31px;top:133px"><svg width="17" height="17" viewBox="0 0 17 17"><rect x="4" y="0.5" width="9" height="6.5" fill="#b8dcf2" stroke="#7fa9c6" stroke-width="0.8"/><rect x="7.5" y="7" width="2" height="1.2" fill="#7fa9c6"/><rect x="0.5" y="8.2" width="16" height="2" fill="#e1bd82"/><rect x="1.8" y="10" width="1.6" height="6" fill="#d9b277"/><rect x="13.6" y="10" width="1.6" height="6" fill="#d9b277"/><rect x="3.4" y="12.8" width="10.2" height="1.4" fill="#e8dfcf"/></svg></div><div class="a" style="left:127px;top:125px;width:1px;height:34px;background:#c8def0"></div><div class="t" style="left:61px;top:134.5px">006</div><div class="a" style="left:216px;top:125px;width:1px;height:34px;background:#c8def0"></div><div class="t" style="left:135px;top:134.5px">Nábytok</div><div class="a" style="left:358px;top:125px;width:1px;height:34px;background:#c8def0"></div><div class="t" style="left:224px;top:134.5px">cecil stolička detská</div><div class="a" style="left:412px;top:125px;width:1px;height:34px;background:#c8def0"></div><div class="t" style="left:359px;width:46px;top:134.5px;text-align:right">1</div><div class="a" style="left:466px;top:125px;width:1px;height:34px;background:#c8def0"></div><div class="t" style="left:413px;width:46px;top:134.5px;text-align:right">2025</div><div class="a" style="left:590px;top:125px;width:1px;height:34px;background:#c8def0"></div><div class="t" style="left:474px;top:134.5px">Učiteľ 05</div><div class="a" style="left:651px;top:125px;width:1px;height:34px;background:#c8def0"></div><div class="t" style="left:591px;width:53px;top:134.5px;text-align:right">50.00</div><div class="a" style="left:720px;top:125px;width:1px;height:34px;background:#c8def0"></div><div class="t" style="left:652px;width:61px;top:134.5px;text-align:right">50.00</div><div class="a" style="left:843px;top:125px;width:1px;height:34px;background:#c8def0"></div><div class="t" style="left:728px;top:134.5px">04. 03. 2025</div><div class="a" style="left:940px;top:125px;width:1px;height:34px;background:#c8def0"></div><div class="a" style="left:1054px;top:125px;width:1px;height:34px;background:#c8def0"></div><div class="t" style="left:948px;top:134.5px">kúpa</div>
<div class="a" style="left:0;top:159px;width:23px;height:34px;background:#d8daf3;border-bottom:1px solid #c8def0"></div><div class="a" style="left:23px;top:159px;width:1px;height:34px;background:#c8def0"></div><div class="a" style="left:24px;top:159px;width:1030px;height:34px;background:#efefef;border-bottom:1px solid #c8def0"></div><div class="a" style="left:53px;top:159px;width:1px;height:34px;background:#c8def0"></div><div class="a" style="left:31px;top:167px"><svg width="17" height="17" viewBox="0 0 17 17"><rect x="4" y="0.5" width="9" height="6.5" fill="#b8dcf2" stroke="#7fa9c6" stroke-width="0.8"/><rect x="7.5" y="7" width="2" height="1.2" fill="#7fa9c6"/><rect x="0.5" y="8.2" width="16" height="2" fill="#e1bd82"/><rect x="1.8" y="10" width="1.6" height="6" fill="#d9b277"/><rect x="13.6" y="10" width="1.6" height="6" fill="#d9b277"/><rect x="3.4" y="12.8" width="10.2" height="1.4" fill="#e8dfcf"/></svg></div><div class="a" style="left:127px;top:159px;width:1px;height:34px;background:#c8def0"></div><div class="t" style="left:61px;top:168.5px">002</div><div class="a" style="left:216px;top:159px;width:1px;height:34px;background:#c8def0"></div><div class="t" style="left:135px;top:168.5px">Nábytok</div><div class="a" style="left:358px;top:159px;width:1px;height:34px;background:#c8def0"></div><div class="t" style="left:224px;top:168.5px">stôl učiteľský</div><div class="a" style="left:412px;top:159px;width:1px;height:34px;background:#c8def0"></div><div class="t" style="left:359px;width:46px;top:168.5px;text-align:right">1</div><div class="a" style="left:466px;top:159px;width:1px;height:34px;background:#c8def0"></div><div class="t" style="left:413px;width:46px;top:168.5px;text-align:right">2025</div><div class="a" style="left:590px;top:159px;width:1px;height:34px;background:#c8def0"></div><div class="t" style="left:474px;top:168.5px">Učiteľ 05</div><div class="a" style="left:651px;top:159px;width:1px;height:34px;background:#c8def0"></div><div class="t" style="left:591px;width:53px;top:168.5px;text-align:right">320.00</div><div class="a" style="left:720px;top:159px;width:1px;height:34px;background:#c8def0"></div><div class="t" style="left:652px;width:61px;top:168.5px;text-align:right">320.00</div><div class="a" style="left:843px;top:159px;width:1px;height:34px;background:#c8def0"></div><div class="t" style="left:728px;top:168.5px">04. 03. 2025</div><div class="a" style="left:940px;top:159px;width:1px;height:34px;background:#c8def0"></div><div class="t" style="left:851px;top:168.5px">STL 00001</div><div class="a" style="left:1054px;top:159px;width:1px;height:34px;background:#c8def0"></div><div class="t" style="left:948px;top:168.5px">kúpa</div>
<div class="a" style="left:0;top:193px;width:23px;height:34px;background:#d8daf3;border-bottom:1px solid #c8def0"></div><div class="a" style="left:23px;top:193px;width:1px;height:34px;background:#c8def0"></div><div class="a" style="left:24px;top:193px;width:1030px;height:34px;background:#f3f3f3;border-bottom:1px solid #c8def0"></div><div class="a" style="left:53px;top:193px;width:1px;height:34px;background:#c8def0"></div><div class="a" style="left:31px;top:201px"><svg width="17" height="17" viewBox="0 0 17 17"><rect x="4" y="0.5" width="9" height="6.5" fill="#b8dcf2" stroke="#7fa9c6" stroke-width="0.8"/><rect x="7.5" y="7" width="2" height="1.2" fill="#7fa9c6"/><rect x="0.5" y="8.2" width="16" height="2" fill="#e1bd82"/><rect x="1.8" y="10" width="1.6" height="6" fill="#d9b277"/><rect x="13.6" y="10" width="1.6" height="6" fill="#d9b277"/><rect x="3.4" y="12.8" width="10.2" height="1.4" fill="#e8dfcf"/></svg></div><div class="a" style="left:127px;top:193px;width:1px;height:34px;background:#c8def0"></div><div class="t" style="left:61px;top:202.5px">001</div><div class="a" style="left:216px;top:193px;width:1px;height:34px;background:#c8def0"></div><div class="t" style="left:135px;top:202.5px">Nábytok</div><div class="a" style="left:358px;top:193px;width:1px;height:34px;background:#c8def0"></div><div class="t" style="left:224px;top:202.5px">stôl učiteľský</div><div class="a" style="left:412px;top:193px;width:1px;height:34px;background:#c8def0"></div><div class="t" style="left:359px;width:46px;top:202.5px;text-align:right">1</div><div class="a" style="left:466px;top:193px;width:1px;height:34px;background:#c8def0"></div><div class="t" style="left:413px;width:46px;top:202.5px;text-align:right">2025</div><div class="a" style="left:590px;top:193px;width:1px;height:34px;background:#c8def0"></div><div class="t" style="left:474px;top:202.5px">Učiteľ 05</div><div class="a" style="left:651px;top:193px;width:1px;height:34px;background:#c8def0"></div><div class="t" style="left:591px;width:53px;top:202.5px;text-align:right">320.00</div><div class="a" style="left:720px;top:193px;width:1px;height:34px;background:#c8def0"></div><div class="t" style="left:652px;width:61px;top:202.5px;text-align:right">320.00</div><div class="a" style="left:843px;top:193px;width:1px;height:34px;background:#c8def0"></div><div class="t" style="left:728px;top:202.5px">04. 03. 2025</div><div class="a" style="left:940px;top:193px;width:1px;height:34px;background:#c8def0"></div><div class="t" style="left:851px;top:202.5px">STL 00001</div><div class="a" style="left:1054px;top:193px;width:1px;height:34px;background:#c8def0"></div><div class="t" style="left:948px;top:202.5px">kúpa</div>
<div class="a" style="left:0;top:227px;width:23px;height:36px;background:#d8daf3;border-bottom:1px solid #c8def0"></div><div class="a" style="left:23px;top:227px;width:1px;height:36px;background:#c8def0"></div><div class="a" style="left:24px;top:227px;width:1030px;height:36px;background:#efefef;border-bottom:1px solid #c8def0"></div><div class="a" style="left:24px;top:227px;width:1030px;height:2px;background:#b8b8b8"></div><div class="a" style="left:358px;top:227px;width:1px;height:36px;background:#c8def0"></div><div class="a" style="left:412px;top:227px;width:1px;height:36px;background:#c8def0"></div><div class="a" style="left:651px;top:227px;width:1px;height:36px;background:#c8def0"></div><div class="a" style="left:720px;top:227px;width:1px;height:36px;background:#c8def0"></div><div class="t" style="left:31px;top:238.5px">Celkom</div><div class="t" style="left:359px;width:46px;top:238.5px;text-align:right">5</div><div class="t" style="left:652px;width:61px;top:238.5px;text-align:right">790.00</div>
<div class="a" style="left:0;top:263px;width:1044px;height:34px;background:#d8daf3;border-bottom:1px solid #c8def0"><div class="btn"></div><div class="t" style="left:30px;top:8.5px">Učebňa: K3</div><div class="t" style="left:1029px;top:8.5px">počet: 5</div></div>
<div class="a" style="left:0;top:297px;width:23px;height:34px;background:#d8daf3;border-bottom:1px solid #c8def0"></div><div class="a" style="left:23px;top:297px;width:1px;height:34px;background:#c8def0"></div><div class="a" style="left:24px;top:297px;width:1030px;height:34px;background:#efefef;border-bottom:1px solid #c8def0"></div><div class="a" style="left:53px;top:297px;width:1px;height:34px;background:#c8def0"></div><div class="a" style="left:31px;top:305px"><svg width="17" height="17" viewBox="0 0 17 17"><rect x="4" y="0.5" width="9" height="6.5" fill="#b8dcf2" stroke="#7fa9c6" stroke-width="0.8"/><rect x="7.5" y="7" width="2" height="1.2" fill="#7fa9c6"/><rect x="0.5" y="8.2" width="16" height="2" fill="#e1bd82"/><rect x="1.8" y="10" width="1.6" height="6" fill="#d9b277"/><rect x="13.6" y="10" width="1.6" height="6" fill="#d9b277"/><rect x="3.4" y="12.8" width="10.2" height="1.4" fill="#e8dfcf"/></svg></div><div class="a" style="left:127px;top:297px;width:1px;height:34px;background:#c8def0"></div><div class="t" style="left:61px;top:306.5px">110</div><div class="a" style="left:216px;top:297px;width:1px;height:34px;background:#c8def0"></div><div class="t" style="left:135px;top:306.5px">Nábytok</div><div class="a" style="left:358px;top:297px;width:1px;height:34px;background:#c8def0"></div><div class="t" style="left:224px;top:306.5px">anvir stolička</div><div class="a" style="left:412px;top:297px;width:1px;height:34px;background:#c8def0"></div><div class="t" style="left:359px;width:46px;top:306.5px;text-align:right">1</div><div class="a" style="left:466px;top:297px;width:1px;height:34px;background:#c8def0"></div><div class="t" style="left:413px;width:46px;top:306.5px;text-align:right">2025</div><div class="a" style="left:590px;top:297px;width:1px;height:34px;background:#c8def0"></div><div class="t" style="left:474px;top:306.5px">Učiteľ 05</div><div class="a" style="left:651px;top:297px;width:1px;height:34px;background:#c8def0"></div><div class="t" style="left:591px;width:53px;top:306.5px;text-align:right">50.00</div><div class="a" style="left:720px;top:297px;width:1px;height:34px;background:#c8def0"></div><div class="t" style="left:652px;width:61px;top:306.5px;text-align:right">50.00</div><div class="a" style="left:843px;top:297px;width:1px;height:34px;background:#c8def0"></div><div class="t" style="left:728px;top:306.5px">04. 03. 2025</div><div class="a" style="left:940px;top:297px;width:1px;height:34px;background:#c8def0"></div><div class="a" style="left:1054px;top:297px;width:1px;height:34px;background:#c8def0"></div><div class="t" style="left:948px;top:306.5px">kúpa</div>
<div class="a" style="left:0;top:331px;width:23px;height:34px;background:#d8daf3;border-bottom:1px solid #c8def0"></div><div class="a" style="left:23px;top:331px;width:1px;height:34px;background:#c8def0"></div><div class="a" style="left:24px;top:331px;width:1030px;height:34px;background:#f3f3f3;border-bottom:1px solid #c8def0"></div><div class="a" style="left:53px;top:331px;width:1px;height:34px;background:#c8def0"></div><div class="a" style="left:31px;top:339px"><svg width="17" height="17" viewBox="0 0 17 17"><rect x="4" y="0.5" width="9" height="6.5" fill="#b8dcf2" stroke="#7fa9c6" stroke-width="0.8"/><rect x="7.5" y="7" width="2" height="1.2" fill="#7fa9c6"/><rect x="0.5" y="8.2" width="16" height="2" fill="#e1bd82"/><rect x="1.8" y="10" width="1.6" height="6" fill="#d9b277"/><rect x="13.6" y="10" width="1.6" height="6" fill="#d9b277"/><rect x="3.4" y="12.8" width="10.2" height="1.4" fill="#e8dfcf"/></svg></div><div class="a" style="left:127px;top:331px;width:1px;height:34px;background:#c8def0"></div><div class="t" style="left:61px;top:340.5px">25</div><div class="a" style="left:216px;top:331px;width:1px;height:34px;background:#c8def0"></div><div class="t" style="left:135px;top:340.5px">Nábytok</div><div class="a" style="left:358px;top:331px;width:1px;height:34px;background:#c8def0"></div><div class="t" style="left:224px;top:340.5px">Havo Stolička detská</div><div class="a" style="left:412px;top:331px;width:1px;height:34px;background:#c8def0"></div><div class="t" style="left:359px;width:46px;top:340.5px;text-align:right">21</div><div class="a" style="left:466px;top:331px;width:1px;height:34px;background:#c8def0"></div><div class="a" style="left:590px;top:331px;width:1px;height:34px;background:#c8def0"></div><div class="t" style="left:474px;top:340.5px">Učiteľ 03</div><div class="a" style="left:651px;top:331px;width:1px;height:34px;background:#c8def0"></div><div class="t" style="left:591px;width:53px;top:340.5px;text-align:right">30.00</div><div class="a" style="left:720px;top:331px;width:1px;height:34px;background:#c8def0"></div><div class="t" style="left:652px;width:61px;top:340.5px;text-align:right">630.00</div><div class="a" style="left:843px;top:331px;width:1px;height:34px;background:#c8def0"></div><div class="a" style="left:940px;top:331px;width:1px;height:34px;background:#c8def0"></div><div class="a" style="left:1054px;top:331px;width:1px;height:34px;background:#c8def0"></div>
<div class="a" style="left:0;top:365px;width:23px;height:34px;background:#d8daf3;border-bottom:1px solid #c8def0"></div><div class="a" style="left:23px;top:365px;width:1px;height:34px;background:#c8def0"></div><div class="a" style="left:24px;top:365px;width:1030px;height:34px;background:#efefef;border-bottom:1px solid #c8def0"></div><div class="a" style="left:53px;top:365px;width:1px;height:34px;background:#c8def0"></div><div class="a" style="left:31px;top:373px"><svg width="17" height="17" viewBox="0 0 17 17"><rect x="4" y="0.5" width="9" height="6.5" fill="#b8dcf2" stroke="#7fa9c6" stroke-width="0.8"/><rect x="7.5" y="7" width="2" height="1.2" fill="#7fa9c6"/><rect x="0.5" y="8.2" width="16" height="2" fill="#e1bd82"/><rect x="1.8" y="10" width="1.6" height="6" fill="#d9b277"/><rect x="13.6" y="10" width="1.6" height="6" fill="#d9b277"/><rect x="3.4" y="12.8" width="10.2" height="1.4" fill="#e8dfcf"/></svg></div><div class="a" style="left:127px;top:365px;width:1px;height:34px;background:#c8def0"></div><div class="t" style="left:61px;top:374.5px">099</div><div class="a" style="left:216px;top:365px;width:1px;height:34px;background:#c8def0"></div><div class="t" style="left:135px;top:374.5px">Nábytok</div><div class="a" style="left:358px;top:365px;width:1px;height:34px;background:#c8def0"></div><div class="t" style="left:224px;top:374.5px">Stôl 1600x800x700</div><div class="a" style="left:412px;top:365px;width:1px;height:34px;background:#c8def0"></div><div class="t" style="left:359px;width:46px;top:374.5px;text-align:right">1</div><div class="a" style="left:466px;top:365px;width:1px;height:34px;background:#c8def0"></div><div class="t" style="left:413px;width:46px;top:374.5px;text-align:right">2025</div><div class="a" style="left:590px;top:365px;width:1px;height:34px;background:#c8def0"></div><div class="t" style="left:474px;top:374.5px">Učiteľ 06</div><div class="a" style="left:651px;top:365px;width:1px;height:34px;background:#c8def0"></div><div class="t" style="left:591px;width:53px;top:374.5px;text-align:right">320.00</div><div class="a" style="left:720px;top:365px;width:1px;height:34px;background:#c8def0"></div><div class="t" style="left:652px;width:61px;top:374.5px;text-align:right">320.00</div><div class="a" style="left:843px;top:365px;width:1px;height:34px;background:#c8def0"></div><div class="t" style="left:728px;top:374.5px">04. 03. 2025</div><div class="a" style="left:940px;top:365px;width:1px;height:34px;background:#c8def0"></div><div class="t" style="left:851px;top:374.5px">STL 00001</div><div class="a" style="left:1054px;top:365px;width:1px;height:34px;background:#c8def0"></div><div class="t" style="left:948px;top:374.5px">kúpa</div>
<div class="a" style="left:0;top:399px;width:23px;height:36px;background:#d8daf3;border-bottom:1px solid #c8def0"></div><div class="a" style="left:23px;top:399px;width:1px;height:36px;background:#c8def0"></div><div class="a" style="left:24px;top:399px;width:1030px;height:36px;background:#efefef;border-bottom:1px solid #c8def0"></div><div class="a" style="left:24px;top:399px;width:1030px;height:2px;background:#b8b8b8"></div><div class="a" style="left:358px;top:399px;width:1px;height:36px;background:#c8def0"></div><div class="a" style="left:412px;top:399px;width:1px;height:36px;background:#c8def0"></div><div class="a" style="left:651px;top:399px;width:1px;height:36px;background:#c8def0"></div><div class="a" style="left:720px;top:399px;width:1px;height:36px;background:#c8def0"></div><div class="t" style="left:31px;top:410.5px">Celkom</div><div class="t" style="left:359px;width:46px;top:410.5px;text-align:right">23</div><div class="t" style="left:652px;width:61px;top:410.5px;text-align:right">1000.00</div>
<div class="a" style="left:0;top:435px;width:1044px;height:34px;background:#d8daf3;border-bottom:1px solid #c8def0"><div class="btn"></div><div class="t" style="left:30px;top:8.5px">Učebňa: K5</div><div class="t" style="left:1029px;top:8.5px">počet: 5</div></div>
<div class="a" style="left:0;top:469px;width:23px;height:34px;background:#d8daf3;border-bottom:1px solid #c8def0"></div><div class="a" style="left:23px;top:469px;width:1px;height:34px;background:#c8def0"></div><div class="a" style="left:24px;top:469px;width:1030px;height:34px;background:#f3f3f3;border-bottom:1px solid #c8def0"></div><div class="a" style="left:53px;top:469px;width:1px;height:34px;background:#c8def0"></div><div class="a" style="left:31px;top:477px"><svg width="17" height="17" viewBox="0 0 17 17"><rect x="4" y="0.5" width="9" height="6.5" fill="#b8dcf2" stroke="#7fa9c6" stroke-width="0.8"/><rect x="7.5" y="7" width="2" height="1.2" fill="#7fa9c6"/><rect x="0.5" y="8.2" width="16" height="2" fill="#e1bd82"/><rect x="1.8" y="10" width="1.6" height="6" fill="#d9b277"/><rect x="13.6" y="10" width="1.6" height="6" fill="#d9b277"/><rect x="3.4" y="12.8" width="10.2" height="1.4" fill="#e8dfcf"/></svg></div><div class="a" style="left:127px;top:469px;width:1px;height:34px;background:#c8def0"></div><div class="t" style="left:61px;top:478.5px">27</div><div class="a" style="left:216px;top:469px;width:1px;height:34px;background:#c8def0"></div><div class="t" style="left:135px;top:478.5px">Nábytok</div><div class="a" style="left:358px;top:469px;width:1px;height:34px;background:#c8def0"></div><div class="t" style="left:224px;top:478.5px">Stolička detská Havo</div><div class="a" style="left:412px;top:469px;width:1px;height:34px;background:#c8def0"></div><div class="t" style="left:359px;width:46px;top:478.5px;text-align:right">18</div><div class="a" style="left:466px;top:469px;width:1px;height:34px;background:#c8def0"></div><div class="a" style="left:590px;top:469px;width:1px;height:34px;background:#c8def0"></div><div class="t" style="left:474px;top:478.5px">Učiteľ 05</div><div class="a" style="left:651px;top:469px;width:1px;height:34px;background:#c8def0"></div><div class="t" style="left:591px;width:53px;top:478.5px;text-align:right">30.00</div><div class="a" style="left:720px;top:469px;width:1px;height:34px;background:#c8def0"></div><div class="t" style="left:652px;width:61px;top:478.5px;text-align:right">540.00</div><div class="a" style="left:843px;top:469px;width:1px;height:34px;background:#c8def0"></div><div class="a" style="left:940px;top:469px;width:1px;height:34px;background:#c8def0"></div><div class="a" style="left:1054px;top:469px;width:1px;height:34px;background:#c8def0"></div>
<div class="a" style="left:0;top:503px;width:23px;height:36px;background:#d8daf3;border-bottom:1px solid #c8def0"></div><div class="a" style="left:23px;top:503px;width:1px;height:36px;background:#c8def0"></div><div class="a" style="left:24px;top:503px;width:1030px;height:36px;background:#efefef;border-bottom:1px solid #c8def0"></div><div class="a" style="left:24px;top:503px;width:1030px;height:2px;background:#b8b8b8"></div><div class="a" style="left:358px;top:503px;width:1px;height:36px;background:#c8def0"></div><div class="a" style="left:412px;top:503px;width:1px;height:36px;background:#c8def0"></div><div class="a" style="left:651px;top:503px;width:1px;height:36px;background:#c8def0"></div><div class="a" style="left:720px;top:503px;width:1px;height:36px;background:#c8def0"></div><div class="t" style="left:31px;top:514.5px">Celkom</div><div class="t" style="left:359px;width:46px;top:514.5px;text-align:right">18</div><div class="t" style="left:652px;width:61px;top:514.5px;text-align:right">540.00</div>
<div class="a" style="left:0;top:539px;width:1044px;height:34px;background:#d8daf3;border-bottom:1px solid #c8def0"><div class="btn"></div><div class="t" style="left:30px;top:8.5px">Učebňa: K7</div><div class="t" style="left:1022px;top:8.5px">počet: 5</div></div>
<div class="a" style="left:0;top:573px;width:23px;height:39px;background:#d8daf3;border-bottom:1px solid #c8def0"></div><div class="a" style="left:23px;top:573px;width:1px;height:39px;background:#c8def0"></div><div class="a" style="left:24px;top:573px;width:1030px;height:39px;background:#efefef;border-bottom:1px solid #c8def0"></div><div class="a" style="left:53px;top:573px;width:1px;height:39px;background:#c8def0"></div><div class="a" style="left:31px;top:584px"><svg width="17" height="17" viewBox="0 0 17 17"><rect x="4" y="0.5" width="9" height="6.5" fill="#b8dcf2" stroke="#7fa9c6" stroke-width="0.8"/><rect x="7.5" y="7" width="2" height="1.2" fill="#7fa9c6"/><rect x="0.5" y="8.2" width="16" height="2" fill="#e1bd82"/><rect x="1.8" y="10" width="1.6" height="6" fill="#d9b277"/><rect x="13.6" y="10" width="1.6" height="6" fill="#d9b277"/><rect x="3.4" y="12.8" width="10.2" height="1.4" fill="#e8dfcf"/></svg></div><div class="a" style="left:127px;top:573px;width:1px;height:39px;background:#c8def0"></div><div class="t" style="left:61px;top:585.0px">25103009</div><div class="a" style="left:216px;top:573px;width:1px;height:39px;background:#c8def0"></div><div class="t" style="left:135px;top:585.0px">Nábytok</div><div class="a" style="left:358px;top:573px;width:1px;height:39px;background:#c8def0"></div><div class="t" style="left:224px;top:578.0px">antikoro skrinka<br>dverová s policou</div><div class="a" style="left:412px;top:573px;width:1px;height:39px;background:#c8def0"></div><div class="t" style="left:359px;width:46px;top:585.0px;text-align:right">3</div><div class="a" style="left:466px;top:573px;width:1px;height:39px;background:#c8def0"></div><div class="a" style="left:590px;top:573px;width:1px;height:39px;background:#c8def0"></div><div class="t" style="left:474px;top:585.0px">Učiteľ 05</div><div class="a" style="left:651px;top:573px;width:1px;height:39px;background:#c8def0"></div><div class="a" style="left:720px;top:573px;width:1px;height:39px;background:#c8def0"></div><div class="a" style="left:843px;top:573px;width:1px;height:39px;background:#c8def0"></div><div class="a" style="left:940px;top:573px;width:1px;height:39px;background:#c8def0"></div><div class="a" style="left:1054px;top:573px;width:1px;height:39px;background:#c8def0"></div><div class="t" style="left:948px;top:585.0px">kúpa</div>
<div class="a" style="left:0;top:612px;width:23px;height:39px;background:#d8daf3;border-bottom:1px solid #c8def0"></div><div class="a" style="left:23px;top:612px;width:1px;height:39px;background:#c8def0"></div><div class="a" style="left:24px;top:612px;width:1030px;height:39px;background:#f3f3f3;border-bottom:1px solid #c8def0"></div><div class="a" style="left:53px;top:612px;width:1px;height:39px;background:#c8def0"></div><div class="a" style="left:31px;top:623px"><svg width="17" height="17" viewBox="0 0 17 17"><rect x="4" y="0.5" width="9" height="6.5" fill="#b8dcf2" stroke="#7fa9c6" stroke-width="0.8"/><rect x="7.5" y="7" width="2" height="1.2" fill="#7fa9c6"/><rect x="0.5" y="8.2" width="16" height="2" fill="#e1bd82"/><rect x="1.8" y="10" width="1.6" height="6" fill="#d9b277"/><rect x="13.6" y="10" width="1.6" height="6" fill="#d9b277"/><rect x="3.4" y="12.8" width="10.2" height="1.4" fill="#e8dfcf"/></svg></div><div class="a" style="left:127px;top:612px;width:1px;height:39px;background:#c8def0"></div><div class="t" style="left:61px;top:624.0px">209</div><div class="a" style="left:216px;top:612px;width:1px;height:39px;background:#c8def0"></div><div class="t" style="left:135px;top:624.0px">Nábytok</div><div class="a" style="left:358px;top:612px;width:1px;height:39px;background:#c8def0"></div><div class="t" style="left:224px;top:617.0px">béžová stolička<br>učiteľská</div><div class="a" style="left:412px;top:612px;width:1px;height:39px;background:#c8def0"></div><div class="t" style="left:359px;width:46px;top:624.0px;text-align:right">1</div><div class="a" style="left:466px;top:612px;width:1px;height:39px;background:#c8def0"></div><div class="t" style="left:413px;width:46px;top:624.0px;text-align:right">2025</div><div class="a" style="left:590px;top:612px;width:1px;height:39px;background:#c8def0"></div><div class="t" style="left:474px;top:624.0px">Učiteľ 05</div><div class="a" style="left:651px;top:612px;width:1px;height:39px;background:#c8def0"></div><div class="t" style="left:591px;width:53px;top:624.0px;text-align:right">97.00</div><div class="a" style="left:720px;top:612px;width:1px;height:39px;background:#c8def0"></div><div class="t" style="left:652px;width:61px;top:624.0px;text-align:right">97.00</div><div class="a" style="left:843px;top:612px;width:1px;height:39px;background:#c8def0"></div><div class="t" style="left:728px;top:624.0px">21. 03. 2025</div><div class="a" style="left:940px;top:612px;width:1px;height:39px;background:#c8def0"></div><div class="a" style="left:1054px;top:612px;width:1px;height:39px;background:#c8def0"></div><div class="t" style="left:948px;top:624.0px">kúpa</div>
<div class="a" style="left:0;top:651px;width:23px;height:39px;background:#d8daf3;border-bottom:1px solid #c8def0"></div><div class="a" style="left:23px;top:651px;width:1px;height:39px;background:#c8def0"></div><div class="a" style="left:24px;top:651px;width:1030px;height:39px;background:#efefef;border-bottom:1px solid #c8def0"></div><div class="a" style="left:53px;top:651px;width:1px;height:39px;background:#c8def0"></div><div class="a" style="left:127px;top:651px;width:1px;height:39px;background:#c8def0"></div><div class="a" style="left:216px;top:651px;width:1px;height:39px;background:#c8def0"></div><div class="a" style="left:358px;top:651px;width:1px;height:39px;background:#c8def0"></div><div class="a" style="left:412px;top:651px;width:1px;height:39px;background:#c8def0"></div><div class="a" style="left:466px;top:651px;width:1px;height:39px;background:#c8def0"></div><div class="a" style="left:590px;top:651px;width:1px;height:39px;background:#c8def0"></div><div class="a" style="left:651px;top:651px;width:1px;height:39px;background:#c8def0"></div><div class="a" style="left:720px;top:651px;width:1px;height:39px;background:#c8def0"></div><div class="a" style="left:843px;top:651px;width:1px;height:39px;background:#c8def0"></div><div class="a" style="left:940px;top:651px;width:1px;height:39px;background:#c8def0"></div><div class="a" style="left:1054px;top:651px;width:1px;height:39px;background:#c8def0"></div>
</div>
<div class="a" style="left:1290px;top:219px;width:14px;height:656px;background:#f0f0f0"></div>
<svg class="a" style="left:1292px;top:223px" width="11" height="9"><polygon points="1.5,7.5 5.5,1.5 9.5,7.5" fill="#a0a0a0" stroke="#a0a0a0" stroke-width="1.5" stroke-linejoin="round"/></svg>
<div class="a" style="left:1293px;top:557px;width:9px;height:100px;border-radius:5px;background:#8f8f8f"></div>
<svg class="a" style="left:1292px;top:863px" width="11" height="9"><polygon points="1.5,1.5 9.5,1.5 5.5,7.5" fill="#8f8f8f" stroke="#8f8f8f" stroke-width="1.5" stroke-linejoin="round"/></svg>
<div class="a" style="left:246px;top:875px;width:1058px;height:14px;background:#f0f0f0"></div>
<svg class="a" style="left:249px;top:877px" width="10" height="11"><polygon points="8.2,1.5 8.2,9.5 1.8,5.5" fill="#8f8f8f" stroke="#8f8f8f" stroke-width="1.5" stroke-linejoin="round"/></svg>
<div class="a" style="left:264px;top:878px;width:975px;height:9px;border-radius:5px;background:#8f8f8f"></div>
<svg class="a" style="left:1277px;top:877px" width="10" height="11"><polygon points="1.8,1.5 1.8,9.5 8.2,5.5" fill="#8f8f8f" stroke="#8f8f8f" stroke-width="1.5" stroke-linejoin="round"/></svg>
<div class="a" style="left:6px;top:48px;width:1298px;height:4px;background:linear-gradient(rgba(0,0,0,.14),rgba(0,0,0,0))"></div>
<div class="a" style="left:454px;top:377px;width:402px;height:141px;background:#fff;border-radius:3px 3px 2px 2px;box-shadow:3px 3px 10px rgba(0,0,0,.42)"></div>
<div class="a" style="left:454px;top:377px;width:402px;height:25px;background:#465964;border-radius:3px 3px 0 0"></div>
<div class="t" style="left:469px;top:383px;color:#fff;font-weight:bold">Edupage</div>
<svg class="a" style="left:838px;top:386px" width="10" height="10" viewBox="0 0 10 10"><path d="M1.2 1.2 L8.8 8.8 M8.8 1.2 L1.2 8.8" stroke="#fff" stroke-width="2.6"/></svg>
<div class="t" style="left:468px;top:408px;color:#444">Pohľad - Uložiť Ako...</div>
<div class="t" style="left:468px;top:436px;color:#444">Názov:</div>
<div class="a" style="left:617px;top:433px;width:200px;height:20px;border:2px solid #111;border-radius:4px;background:#fff"></div>
<div class="t" style="left:621px;top:436px;color:#333">01 Učebne</div>
<div class="a" style="left:679px;top:436px;width:1px;height:14px;background:#111"></div>
<div class="a" style="left:454px;top:466px;width:402px;height:1px;background:#e2e2e2"></div>
<div class="a" style="left:745px;top:477px;width:38px;height:30px;background:#51a957;border-radius:3px;border:1px solid #479c4d"></div>
<div class="t" style="left:745px;width:38px;text-align:center;top:485px;color:#fff">Ok</div>
<div class="a" style="left:791px;top:477px;width:51px;height:30px;background:#f4f5f8;border:1px solid #e1e3e8;border-radius:2px"></div>
<div class="t" style="left:790px;width:51px;text-align:center;top:485px;color:#333">Zrušiť</div>
<div class="red" style="left:434px;top:40px;width:77px;height:36px"></div>
<div class="red" style="left:489px;top:98px;width:85px;height:31px"></div>
<div class="red" style="left:608px;top:426px;width:217px;height:35px"></div>
<div class="red" style="left:738px;top:471px;width:53px;height:43px"></div>
</body></html>
